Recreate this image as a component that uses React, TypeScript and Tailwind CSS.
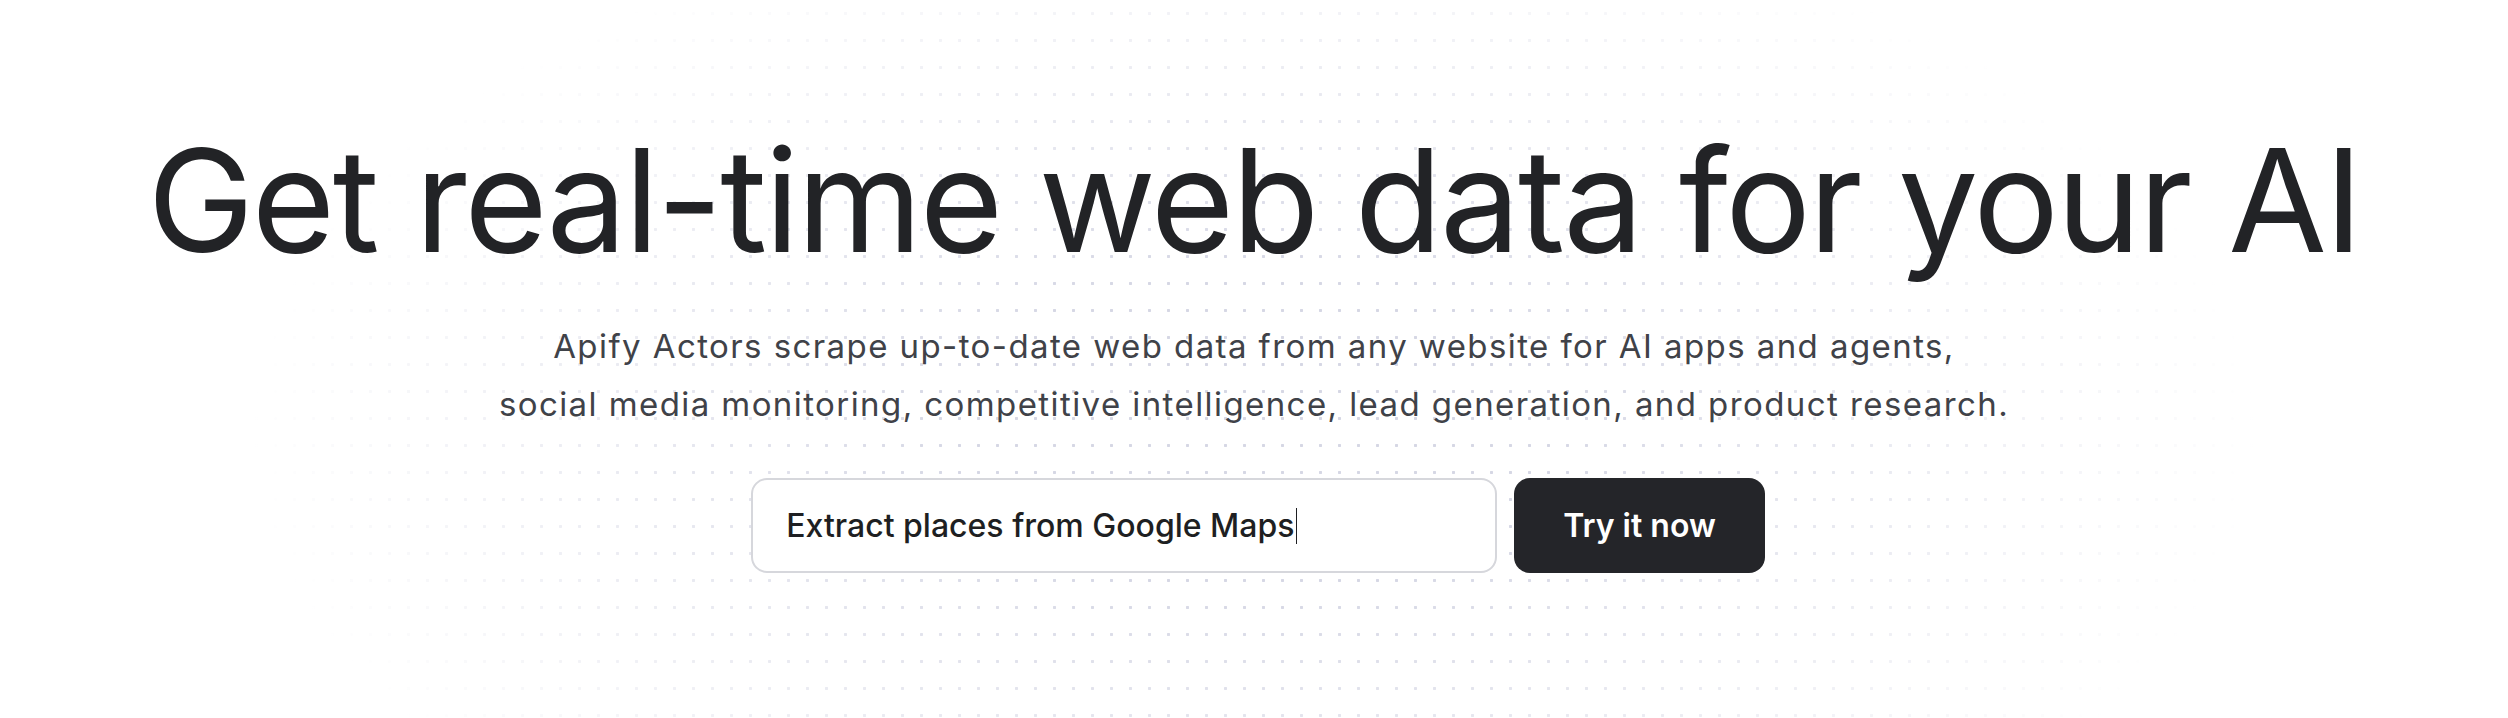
export default function App() {
  return (
    <div className="relative w-full h-[718px] overflow-hidden bg-white font-['Inter','Liberation_Sans',sans-serif]">
      {/* faint dot grid, fading out from the middle */}
      <div className="absolute inset-0 bg-[radial-gradient(#c5c7da_1.2px,transparent_1.4px)] bg-[size:19px_27px] [mask-image:radial-gradient(ellipse_40%_75%_at_50%_60%,black_30%,transparent_100%)] opacity-70" />

      <main className="relative flex flex-col items-center pt-[128px]">
        <h1 className="text-[143px] leading-none font-normal tracking-[-0.0165em] text-[#222326] whitespace-nowrap">
          Get real-time web data for your AI
        </h1>

        <p className="mt-[46px] text-[33px] leading-[58px] tracking-[0.043em] text-[#404248] text-center whitespace-nowrap">
          <span className="block">Apify Actors scrape up-to-date web data from any website for AI apps and agents,</span>
          <span className="block">social media monitoring, competitive intelligence, lead generation, and product research.</span>
        </p>

        <div className="mt-[45px] ml-[8px] flex items-center gap-[17px]">
          <div className="flex items-center w-[746px] h-[95px] px-[33px] rounded-[16px] border-2 border-[#d6d7dc] bg-white">
            <span className="text-[32px] font-medium text-[#1e1f22]">Extract places from Google Maps</span>
            <span className="ml-[1px] w-[1.5px] h-[36px] bg-[#1e1f22]" />
          </div>
          <button className="h-[95px] px-[49px] rounded-[16px] bg-[#242529] text-white text-[32px] font-semibold">
            Try it now
          </button>
        </div>
      </main>
    </div>
  );
}
